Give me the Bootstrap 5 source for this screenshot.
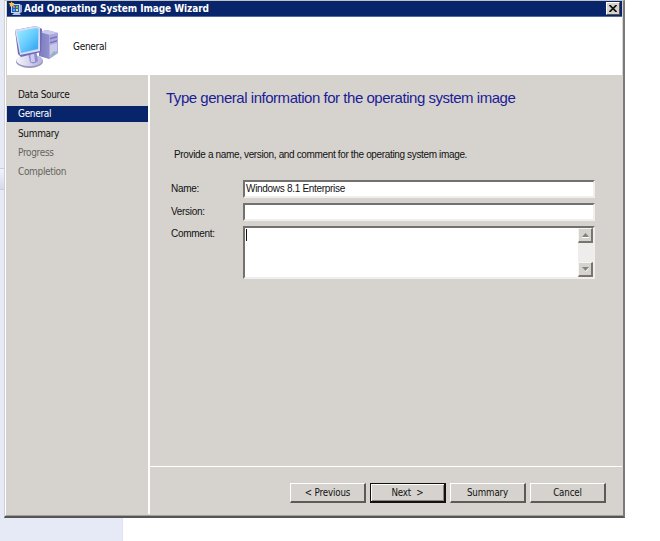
<!DOCTYPE html>
<html lang="en">
<head>
<meta charset="utf-8">
<title>Add Operating System Image Wizard</title>
<link href="https://cdn.jsdelivr.net/npm/bootstrap@5.3.0/dist/css/bootstrap.min.css" rel="stylesheet">
<style>
body{width:660px;height:541px;background:#fff;font:10px/13px "DejaVu Sans Condensed","DejaVu Sans",sans-serif;color:#111}
.backdrop{width:123px;height:541px;background:#e6eaf6;border-right:1px solid #dfe3f3}
.backdrop-tab{top:168px;width:5px;height:22px;background:linear-gradient(#f2f4fb,#d4daee);border:solid #c9cede;border-width:1px 0}
.wizard{left:4px;top:0;width:621px;height:518px;background:#d6d3ce;border:solid;border-width:1px 2px 2px 1px;border-color:#c4c4c4 #7b7b7b #555 #d0d0d0}
.wizard-frame{border-left:1px solid #fff;border-bottom:1px solid #a09f9a;padding:0 1px 1px}
.title-bar{height:16px;background:#08246b;border-bottom:1px solid #5369a0;color:#fff;font-weight:700;padding:0 2px 0 1px}
.title-text{font-size:10px;letter-spacing:-.07px;line-height:16px;margin-left:1px}
.close-btn{width:14px;height:13px;margin-top:1px;background:#d6d3ce;border:1px solid;border-color:#fff #55534f #55534f #fff}
.banner{height:58px;background:#fff}
.banner-text{margin-left:13px;padding-top:1px;letter-spacing:-.3px}
.steps{width:143px;border-right:2px solid #fff;padding-top:12px}
.step{height:16px;line-height:16px;padding-left:11px;margin-bottom:3.3px;letter-spacing:-.34px}
.step.current{background:#08246b;color:#fff}
.step.pending{color:#66645e}
.pane{font-family:"Liberation Sans",Arial,sans-serif;font-size:10px;letter-spacing:-.35px}
.pane-body{height:391px;padding:13px 27px 0 16px}
.headline{font-size:15px;line-height:20px;color:#1c1c96;font-weight:400;letter-spacing:-.47px}
.intro{margin:40px 0 0 8px}
.fields{margin:19px 0 0 5px;gap:5px}
.field-label{width:72px;line-height:15px;padding-top:1px;letter-spacing:-.3px}
.sunken{background:#fff;border:solid;border-width:2px;border-color:#73716f #f0efed #f0efed #73716f;line-height:14px}
.one-line{height:18px;padding-left:1px;letter-spacing:-.3px}
.comment-box{height:53px}
.comment-label{padding-top:0}
.caret{width:1px;height:12px;background:#111;margin:1px 0 0 1px}
.scroll-col{width:15px;background:#eeedeb}
.scroll-btn{height:15px;background:#d6d3ce;border:solid;border-width:1px 2px 2px 1px;border-color:#f6f5f3 #77756f #77756f #f6f5f3}
.foot{border-top:1px solid #fff;padding:16px 16px 0 0;gap:4px}
.wiz-btn{width:76px;height:20px;padding:0;border-radius:0;border:solid;border-width:1px 2px 2px 1px;border-color:#fff #5d5b57 #5d5b57 #fff;font:9.7px/17px "DejaVu Sans Condensed","DejaVu Sans",sans-serif;letter-spacing:-.15px;color:#111;background:#d6d3ce}
.wiz-btn.primary{border-color:#111;border-width:1px 2px 2px 1px;box-shadow:inset 1px 1px #fff,inset -1px -1px #89877f}
</style>
</head>
<body class="position-relative overflow-hidden">
<div class="backdrop position-relative"><div class="backdrop-tab position-absolute start-0"></div></div>
<main class="wizard position-absolute">
<div class="wizard-frame h-100 d-flex flex-column">
<header class="title-bar d-flex">
<svg width="15" height="15" viewBox="0 0 15 15"><path d="M10 3l4 1v7l-3 2z" fill="#9aa3d3"/><path d="M3 3h9v9H3z" fill="#c5d2ec"/><path d="M4 4h7v7H4z" fill="#1d63c4"/><path d="M5 5h2v2H5z" fill="#e9763c"/><path d="M8 5h2v2H8z" fill="#6fc04e"/><path d="M5 8h2v2H5z" fill="#56a6f5"/><path d="M8 8h2v2H8z" fill="#f3d24f"/><path d="M4 14l2-2h5l2 2z" fill="#b9c3e2"/><path d="M3.500 .5l1 1.500 2 .2-1.200 1.500.4 2-2-.9-2 .9.300-2L.6 2.300l2-.3z" fill="#ffc044"/></svg>
<span class="title-text flex-grow-1 text-nowrap">Add Operating System Image Wizard</span>
<span class="close-btn d-flex align-items-center justify-content-center"><svg width="8" height="7" viewBox="0 0 8 7"><path d="M.5 0L7.5 7M7.5 0L.5 7" stroke="#111" stroke-width="1.7"/></svg></span>
</header>
<section class="banner d-flex">
<svg width="53" height="58" viewBox="7 17 53 58"><defs><linearGradient id="screen" x2="1" y2="1"><stop stop-color="#a2edff"/><stop offset=".5" stop-color="#66cdfc"/><stop offset="1" stop-color="#2c9cef"/></linearGradient><linearGradient id="shell" x2="1"><stop stop-color="#7b7bc0"/><stop offset="1" stop-color="#a5a3da"/></linearGradient><linearGradient id="stand" x2="1"><stop stop-color="#f6f6fd"/><stop offset="1" stop-color="#b2b0d8"/></linearGradient></defs>
<path d="M39 32l8-2 11 3v20l-9 6-10-3z" fill="url(#shell)"/><path d="M39 32l8-2 11 3-8 2z" fill="#c9c9ee"/><path d="M49 35l9-2v20l-9 6z" fill="#aaa8de"/><path d="M50 38l7-2v1.500l-7 2zM50 42l7-2v1.500l-7 2z" fill="#7775b8"/><path d="M50 45l7-2v8l-7 4z" fill="#c8c6ea"/><path d="M52 53l3-2v2l-3 2z" fill="#61d47a"/>
<ellipse cx="29.500" cy="61.500" rx="13.500" ry="6.500" fill="#9795bd"/><ellipse cx="29.500" cy="60.300" rx="13" ry="6" fill="url(#stand)"/><path d="M28 52l8-2 2 11c-3 3-6 3-8 1z" fill="#8f8dcd"/><path d="M30 53l4-1 1 10h-4z" fill="#cccaf0"/>
<path d="M15 30l21-4 6 3-1 23-20 5-3-3z" fill="#6d6bb4"/><path d="M15 30l21-4 4 2v23l-20 4z" fill="#d9dcf6"/><path d="M17 31.500l19-3.500 2.500 1-.5 20-17 4z" fill="url(#screen)"/></svg>
<span class="banner-text align-self-center">General</span>
</section>
<div class="d-flex flex-grow-1">
<nav class="steps flex-shrink-0">
<div class="step">Data Source</div>
<div class="step current">General</div>
<div class="step">Summary</div>
<div class="step pending">Progress</div>
<div class="step pending">Completion</div>
</nav>
<section class="pane flex-grow-1">
<div class="pane-body">
<h1 class="headline m-0 text-nowrap">Type general information for the operating system image</h1>
<p class="intro text-nowrap mb-0">Provide a name, version, and comment for the operating system image.</p>
<div class="fields d-flex flex-column">
<div class="d-flex"><span class="field-label">Name:</span><div class="sunken one-line flex-grow-1">Windows 8.1 Enterprise</div></div>
<div class="d-flex"><span class="field-label">Version:</span><div class="sunken one-line flex-grow-1"></div></div>
<div class="d-flex"><span class="field-label comment-label">Comment:</span><div class="sunken comment-box flex-grow-1 d-flex justify-content-between"><div class="caret"></div>
<div class="scroll-col d-flex flex-column justify-content-between">
<span class="scroll-btn d-flex align-items-center justify-content-center"><svg width="7" height="5"><path d="M0 4h7L3.5 0z" fill="#84827c"/><path d="M0 4.5h7" stroke="#fff"/></svg></span>
<span class="scroll-btn d-flex align-items-center justify-content-center"><svg width="7" height="5"><path d="M1 1h6L4 5z" fill="#fff"/><path d="M0 0h7L3.5 4z" fill="#84827c"/></svg></span>
</div></div></div>
</div>
</div>
<footer class="foot d-flex justify-content-end">
<button class="btn wiz-btn">&lt; Previous</button><button class="btn wiz-btn primary">Next &nbsp;&gt;</button><button class="btn wiz-btn">Summary</button><button class="btn wiz-btn">Cancel</button>
</footer>
</section>
</div>
</div>
</main>
<script src="https://cdn.jsdelivr.net/npm/bootstrap@5.3.0/dist/js/bootstrap.bundle.min.js"></script>
</body>
</html>
